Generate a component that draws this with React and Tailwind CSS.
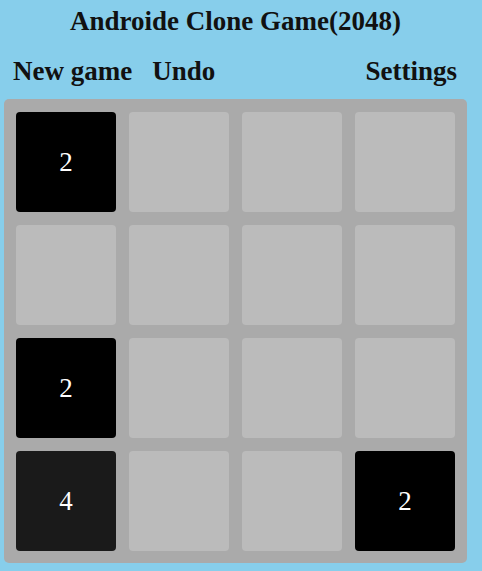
const board = [
  [2, 0, 0, 0],
  [0, 0, 0, 0],
  [2, 0, 0, 0],
  [4, 0, 0, 2],
];

const tileBg = {
  0: "bg-[#bbbbbb]",
  2: "bg-black",
  4: "bg-[#1a1a1a]",
};

function Tile({ value }) {
  return (
    <div
      className={`w-[100px] h-[100px] rounded-[4px] flex items-center justify-center text-white text-[27px] ${tileBg[value]}`}
    >
      {value ? value : ""}
    </div>
  );
}

export default function App() {
  return (
    <div
      className="min-h-[571px] bg-[#87ceeb] text-[#111]"
      style={{ fontFamily: "'Liberation Serif', 'Times New Roman', serif" }}
    >
      <div className="w-[471px] pt-[6px]">
        <h1 className="text-center text-[27px] font-bold leading-[30px]">Androide Clone Game(2048)</h1>

        <div className="flex items-center mt-[20px] h-[30px] text-[27px] font-bold">
          <button className="ml-[13px] font-bold">New game</button>
          <button className="ml-[20px] font-bold">Undo</button>
          <button className="ml-auto mr-[14px] font-bold">Settings</button>
        </div>

        <div className="mx-[4px] mt-[13px] bg-[#aaaaaa] rounded-[5px] pt-[13px] px-[12px] pb-[12px] grid grid-cols-4 gap-[13px] w-[463px]">
          {board.flat().map((v, i) => (
            <Tile key={i} value={v} />
          ))}
        </div>
      </div>
    </div>
  );
}
